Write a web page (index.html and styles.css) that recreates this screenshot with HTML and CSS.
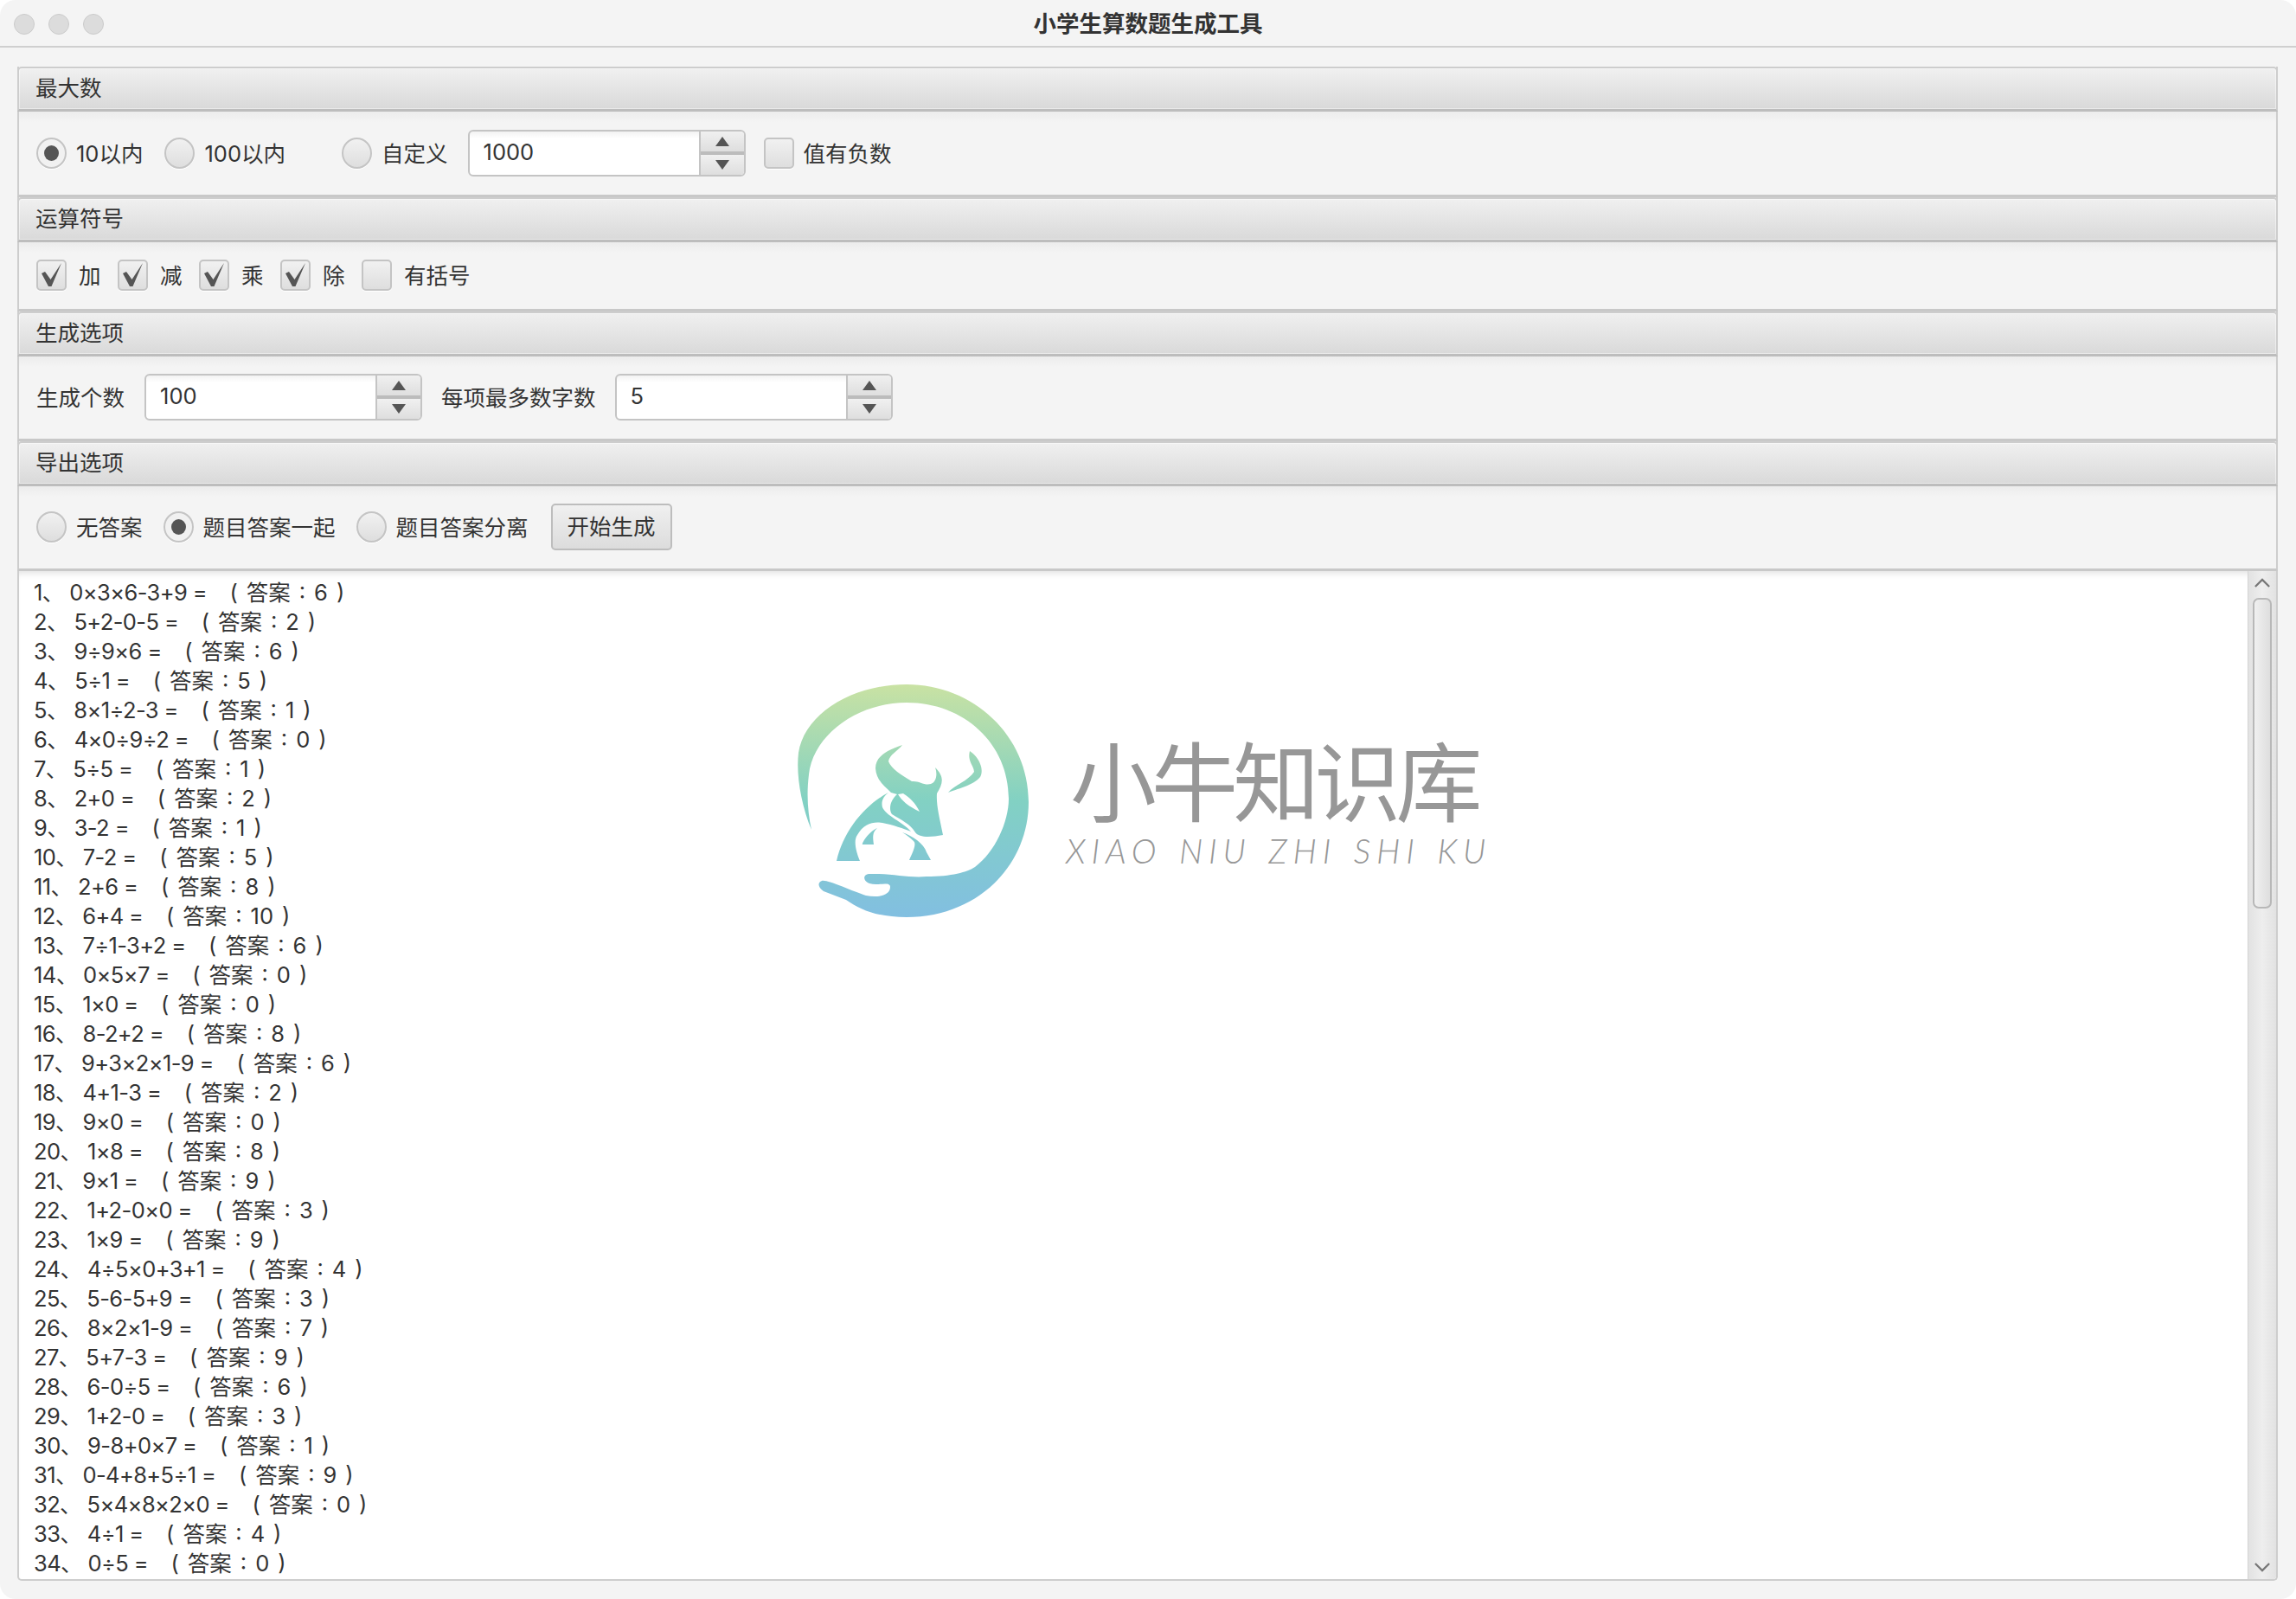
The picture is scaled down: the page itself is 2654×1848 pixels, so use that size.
FILE: index.html
```html
<!DOCTYPE html>
<html>
  <head>
    <meta charset='utf-8'>
    <title>小学生算数题生成工具</title>
    <link rel="stylesheet" href="styles.css">
  </head>
  <body>
    <div class="window">
      <header class="titlebar">
        <div class="lights"><i></i><i></i><i></i></div>
        <h1>小学生算数题生成工具</h1>
      </header>
      <main class="content">
        <section class="panel">
          <h2>最大数</h2>
          <div class="row row-max">
            <span class="radio on"></span><label class="w-10">10以内</label>
            <span class="radio"></span><label class="w-100">100以内</label>
            <span class="radio"></span><label class="w-self">自定义</label>
            <div class="spinner"><span class="value">1000</span><div class="spin"><b class="up"></b><b class="down"></b></div></div>
            <span class="check"></span><label>值有负数</label>
          </div>
        </section>
        <section class="panel">
          <h2>运算符号</h2>
          <div class="row row-ops">
            <span class="check on"><svg viewBox="0 0 31 32"><path d="M4 14 L8 12 L14.500 21 L27 2 L15.500 29 L12 29 Z"/></svg></span><label>加</label>
            <span class="check on"><svg viewBox="0 0 31 32"><path d="M4 14 L8 12 L14.500 21 L27 2 L15.500 29 L12 29 Z"/></svg></span><label>减</label>
            <span class="check on"><svg viewBox="0 0 31 32"><path d="M4 14 L8 12 L14.500 21 L27 2 L15.500 29 L12 29 Z"/></svg></span><label>乘</label>
            <span class="check on"><svg viewBox="0 0 31 32"><path d="M4 14 L8 12 L14.500 21 L27 2 L15.500 29 L12 29 Z"/></svg></span><label>除</label>
            <span class="check"></span><label>有括号</label>
          </div>
        </section>
        <section class="panel">
          <h2>生成选项</h2>
          <div class="row row-gen">
            <label>生成个数</label>
            <div class="spinner"><span class="value">100</span><div class="spin"><b class="up"></b><b class="down"></b></div></div>
            <label class="w-most">每项最多数字数</label>
            <div class="spinner"><span class="value">5</span><div class="spin"><b class="up"></b><b class="down"></b></div></div>
          </div>
        </section>
        <section class="panel">
          <h2>导出选项</h2>
          <div class="row row-out">
            <span class="radio"></span><label>无答案</label>
            <span class="radio on"></span><label>题目答案一起</label>
            <span class="radio"></span><label>题目答案分离</label>
            <button class="start">开始生成</button>
          </div>
        </section>
        <section class="output">
<pre class="lines">1、 0×3×6-3+9 = <span class="ans">( 答案 : 6 )</span>
2、 5+2-0-5 = <span class="ans">( 答案 : 2 )</span>
3、 9÷9×6 = <span class="ans">( 答案 : 6 )</span>
4、 5÷1 = <span class="ans">( 答案 : 5 )</span>
5、 8×1÷2-3 = <span class="ans">( 答案 : 1 )</span>
6、 4×0÷9÷2 = <span class="ans">( 答案 : 0 )</span>
7、 5÷5 = <span class="ans">( 答案 : 1 )</span>
8、 2+0 = <span class="ans">( 答案 : 2 )</span>
9、 3-2 = <span class="ans">( 答案 : 1 )</span>
10、 7-2 = <span class="ans">( 答案 : 5 )</span>
11、 2+6 = <span class="ans">( 答案 : 8 )</span>
12、 6+4 = <span class="ans">( 答案 : 10 )</span>
13、 7÷1-3+2 = <span class="ans">( 答案 : 6 )</span>
14、 0×5×7 = <span class="ans">( 答案 : 0 )</span>
15、 1×0 = <span class="ans">( 答案 : 0 )</span>
16、 8-2+2 = <span class="ans">( 答案 : 8 )</span>
17、 9+3×2×1-9 = <span class="ans">( 答案 : 6 )</span>
18、 4+1-3 = <span class="ans">( 答案 : 2 )</span>
19、 9×0 = <span class="ans">( 答案 : 0 )</span>
20、 1×8 = <span class="ans">( 答案 : 8 )</span>
21、 9×1 = <span class="ans">( 答案 : 9 )</span>
22、 1+2-0×0 = <span class="ans">( 答案 : 3 )</span>
23、 1×9 = <span class="ans">( 答案 : 9 )</span>
24、 4÷5×0+3+1 = <span class="ans">( 答案 : 4 )</span>
25、 5-6-5+9 = <span class="ans">( 答案 : 3 )</span>
26、 8×2×1-9 = <span class="ans">( 答案 : 7 )</span>
27、 5+7-3 = <span class="ans">( 答案 : 9 )</span>
28、 6-0÷5 = <span class="ans">( 答案 : 6 )</span>
29、 1+2-0 = <span class="ans">( 答案 : 3 )</span>
30、 9-8+0×7 = <span class="ans">( 答案 : 1 )</span>
31、 0-4+8+5÷1 = <span class="ans">( 答案 : 9 )</span>
32、 5×4×8×2×0 = <span class="ans">( 答案 : 0 )</span>
33、 4÷1 = <span class="ans">( 答案 : 4 )</span>
34、 0÷5 = <span class="ans">( 答案 : 0 )</span></pre>
          <div class="scrollbar">
            <svg class="arrow" viewBox="0 0 20 12"><path d="M1 11 L10 2 L19 11"/></svg>
            <div class="thumb"></div>
            <svg class="arrow arrow-down" viewBox="0 0 20 12"><path d="M1 1 L10 10 L19 1"/></svg>
          </div>
          <div class="watermark">
            <svg class="mark" viewBox="915 785 280 280">
              <defs>
                <linearGradient id="fade" gradientUnits="userSpaceOnUse" x1="0" y1="791" x2="0" y2="1060">
                  <stop offset="0" stop-color="#c9e2a3"/>
                  <stop offset="0.5" stop-color="#82d1c3"/>
                  <stop offset="1" stop-color="#82bfe1"/>
                </linearGradient>
              </defs>
              <g fill="url(#fade)">
                <path d="M938 959 C926 930 920 895 923 870 C930 825 985 791 1048 791 C1125 791 1189 850 1189 927 C1189 1000 1130 1060 1048 1060 C1015 1060 995 1052 978 1040 L952 1030 C945 1025 945 1020 950 1018 C956 1016 985 1030 1001 1035 C1015 1038 1029 1035 1029 1025 C1029 1018 1015 1024 1005 1021 C997 1018 997 1010 1006 1010 C1030 1009 1050 1015 1071 1013 C1100 1013 1118 1008 1127 1002 C1150 985 1166 950 1166 923 C1166 860 1115 812 1048 812 C990 812 940 850 935 895 C932 920 934 940 938 959 Z"/>
                <path d="M1027 916 C1000 930 975 960 967 995 L994 995 C990 985 986 972 991 965 C998 952 1010 949 1020 951 C1032 953 1045 958 1053 961 C1044 950 1024 943 1020 933 C1018 925 1022 920 1027 916 Z"/>
                <path d="M1043 861 C1022 868 1012 876 1012 888 C1013 902 1022 908 1030 916 L1037 918 C1029 925 1027 935 1031 941 C1042 948 1052 952 1058 962 C1062 968 1075 968 1090 965 C1086 945 1082 930 1083 917 C1090 905 1092 898 1081 887 C1084 895 1082 904 1076 906 C1068 908 1062 902 1054 903 C1042 896 1030 888 1027 880 C1028 872 1038 868 1043 861 Z"/>
                <path d="M1043 962 C1055 966 1068 975 1071 985 L1076 994 L1051 994 C1055 985 1060 975 1056 972 C1052 968 1048 965 1043 962 Z"/>
                <path d="M1014 957 C1003 962 996 975 997 976 L1010 976 C1009 968 1008 962 1014 957 Z"/>
                <path d="M1121 868 C1132 875 1138 890 1133 898 C1125 908 1105 912 1096 916 C1102 908 1120 902 1126 892 C1126 885 1118 880 1121 868 Z"/>
              </g>
              <path class="notch" d="M1038 918 C1042 925 1050 932 1063 938 C1058 928 1052 922 1044 917 Z"/>
            </svg>
            <div class="brand">
              <div class="brand-cn">小牛知识库</div>
              <div class="brand-en">XIAO NIU ZHI SHI KU</div>
            </div>
          </div>
        </section>
      </main>
    </div>
  </body>
</html>
```

FILE: styles.css
```css
html, body, h1, h2, pre {
    margin: 0;
    padding: 0;
}
body {
    background-color: #fff;
    font-family: Inter, "Noto Sans CJK SC", sans-serif;
    font-size: 25.500px;
    color: #333;
}
.window {
    height: 1848px;
    width: 2654px;
    background-color: #f4f4f4;
    border-radius: 18px;
    overflow: hidden;
    display: flex;
    flex-direction: column;
}
.titlebar {
    height: 55px;
    border-bottom: 2px solid #cfcfcf;
    box-sizing: border-box;
    display: flex;
    align-items: center;
    justify-content: center;
    position: relative;
    flex: none;
}
.titlebar h1 {
    font-size: 26.500px;
    font-weight: bold;
    color: #333;
    padding-bottom: 3px;
}
.lights {
    position: absolute;
    left: 16px;
    top: 16px;
    display: flex;
    gap: 16px;
}
.lights i {
    width: 24px;
    height: 24px;
    box-sizing: border-box;
    border-radius: 50%;
    background-color: #dcdcdc;
    border: 1px solid #cbcbcb;
}
.content {
    padding: 22px 21px 21px 20px;
    display: flex;
    flex-direction: column;
    flex: 1;
    min-height: 0;
}
.panel {
    flex: none;
    border-left: 2px solid #cdcdcd;
    border-right: 2px solid #cdcdcd;
    border-bottom: 3px solid #c8c8c8;
    background-color: #f4f4f4;
}
.panel h2 {
    height: 52px;
    box-sizing: border-box;
    margin-left: -2px;
    margin-right: -2px;
    padding-left: 19px;
    line-height: 46px;
    font-size: 25.500px;
    font-weight: normal;
    color: #333;
    background: linear-gradient(#f0f0f0, #d9d9d9);
    border: 2px solid #cdcdcd;
    border-bottom: 3px solid #bdbdbd;
    border-radius: 5px 5px 0 0;
    box-shadow: inset 0 0 0 1px rgba(255, 255, 255, .45);
}
.row {
    display: flex;
    align-items: center;
    height: 54px;
    padding: 21px 0 21px 20px;
    background: linear-gradient(#ececec, #f4f4f4 12px);
}
.row-ops {
    height: 35px;
    padding-top: 20px;
    padding-bottom: 22px;
}
.radio {
    flex: none;
    width: 35px;
    height: 36px;
    box-sizing: border-box;
    border-radius: 50%;
    border: 2px solid #c4c4c4;
    background: linear-gradient(#f1f1f1, #dedede);
    box-shadow: 0 1px 0 #fff;
    position: relative;
}
.radio.on::after {
    content: '';
    position: absolute;
    left: 7px;
    top: 7px;
    width: 17px;
    height: 18px;
    border-radius: 50%;
    background-color: #555;
}
.radio.on {
    background: #f1f1f1;
}
.check {
    flex: none;
    width: 35px;
    height: 36px;
    box-sizing: border-box;
    border-radius: 5px;
    border: 2px solid #c4c4c4;
    background: linear-gradient(#f1f1f1, #dedede);
    box-shadow: 0 1px 0 #fff;
}
.check svg {
    display: block;
    width: 31px;
    height: 32px;
    fill: #555;
}
.row label {
    flex: none;
    margin-left: 11px;
    padding-bottom: 3px;
    color: #333;
}
.row-max .w-10 {
    margin-right: 25px;
}
.row-max .w-100 {
    margin-right: 65px;
}
.row-max .w-self {
    margin-right: 23px;
}
.row-max .spinner {
    margin-right: 21px;
}
.row-ops label {
    margin-left: 14px;
    margin-right: 19.500px;
}
.row-gen {
    padding-top: 20px;
    padding-left: 20px;
}
.row-gen label {
    margin-left: 0;
    margin-right: 23px;
}
.row-gen .spinner {
    margin-right: 22px;
}
.row-gen .w-most {
    margin-right: 22px;
}
.row-out {
    padding-top: 20px;
}
.row-out label {
    margin-right: 24px;
}
.row-out .start {
    margin-left: 2px;
}
.spinner {
    flex: none;
    width: 321px;
    height: 54px;
    box-sizing: border-box;
    display: flex;
    border: 2px solid #c4c4c4;
    border-radius: 6px;
    background: linear-gradient(#f2f2f2, #fff 8px);
    overflow: hidden;
}
.value {
    flex: 1;
    padding-left: 16px;
    line-height: 47px;
}
.spin {
    flex: none;
    width: 52px;
    display: flex;
    flex-direction: column;
    border-left: 2px solid #c4c4c4;
    box-sizing: border-box;
}
.spin b {
    flex: 1;
    display: flex;
    align-items: center;
    justify-content: center;
    background: linear-gradient(#f0f0f0, #dedede);
}
.spin .down {
    border-top: 4px solid #bcbcbc;
}
.spin b::after {
    content: '';
    border-left: 8px solid transparent;
    border-right: 8px solid transparent;
}
.spin .up::after {
    border-bottom: 11px solid #555;
}
.spin .down::after {
    border-top: 11px solid #555;
}
.start {
    flex: none;
    width: 140px;
    height: 54px;
    font: inherit;
    color: #333;
    padding: 0 0 6px 0;
    border: 2px solid #bdbdbd;
    border-radius: 5px;
    background: linear-gradient(#f0f0f0, #dcdcdc);
}
.output {
    flex: 1;
    min-height: 0;
    display: flex;
    position: relative;
    background-color: #fff;
    border: 2px solid #cdcdcd;
    border-top: 0;
    border-radius: 0 0 5px 5px;
    overflow: hidden;
    box-shadow: inset 0 8px 8px -6px #ddd;
}
.lines {
    flex: 1;
    min-width: 0;
    overflow: hidden;
    padding: 8px 0 0 17px;
    font-family: inherit;
    line-height: 34px;
    letter-spacing: -.6px;
    color: #333;
}
.ans {
    margin-left: 20px;
    letter-spacing: 0;
    word-spacing: 2.800px;
}
.scrollbar {
    flex: none;
    width: 33px;
    box-sizing: border-box;
    display: flex;
    flex-direction: column;
    align-items: center;
    position: relative;
    border-left: 1px solid #d4d4d4;
    background: linear-gradient(90deg, #e2e2e2, #eeeeee 50%, #e2e2e2);
}
.arrow {
    flex: none;
    width: 18px;
    height: 11px;
    margin-top: 8px;
    fill: none;
    stroke: #777;
    stroke-width: 2.500;
}
.arrow-down {
    margin-top: auto;
    margin-bottom: 8px;
}
.thumb {
    flex: none;
    width: 22px;
    height: 359px;
    box-sizing: border-box;
    margin-top: 12px;
    border: 2px solid #b8b8b8;
    border-radius: 7px;
    background: linear-gradient(90deg, #f0f0f0, #dedede);
}
.watermark {
    position: absolute;
    left: 893px;
    top: 125px;
    display: flex;
    pointer-events: none;
}
.mark {
    width: 280px;
    height: 280px;
    flex: none;
}
.notch {
    fill: #fff;
}
.brand {
    margin-left: 29px;
    margin-top: 59px;
    color: #979797;
}
.brand-cn {
    font-family: "Noto Sans CJK SC", sans-serif;
    font-weight: 400;
    font-size: 100px;
    line-height: 110px;
    letter-spacing: -5.900px;
    margin-left: 13px;
    white-space: nowrap;
}
.brand-en {
    font-family: Lato, sans-serif;
    font-weight: 300;
    font-style: italic;
    font-size: 39px;
    line-height: 44px;
    margin-top: 7px;
    margin-left: 8px;
    letter-spacing: 6.800px;
    word-spacing: 3px;
    white-space: nowrap;
}
```
